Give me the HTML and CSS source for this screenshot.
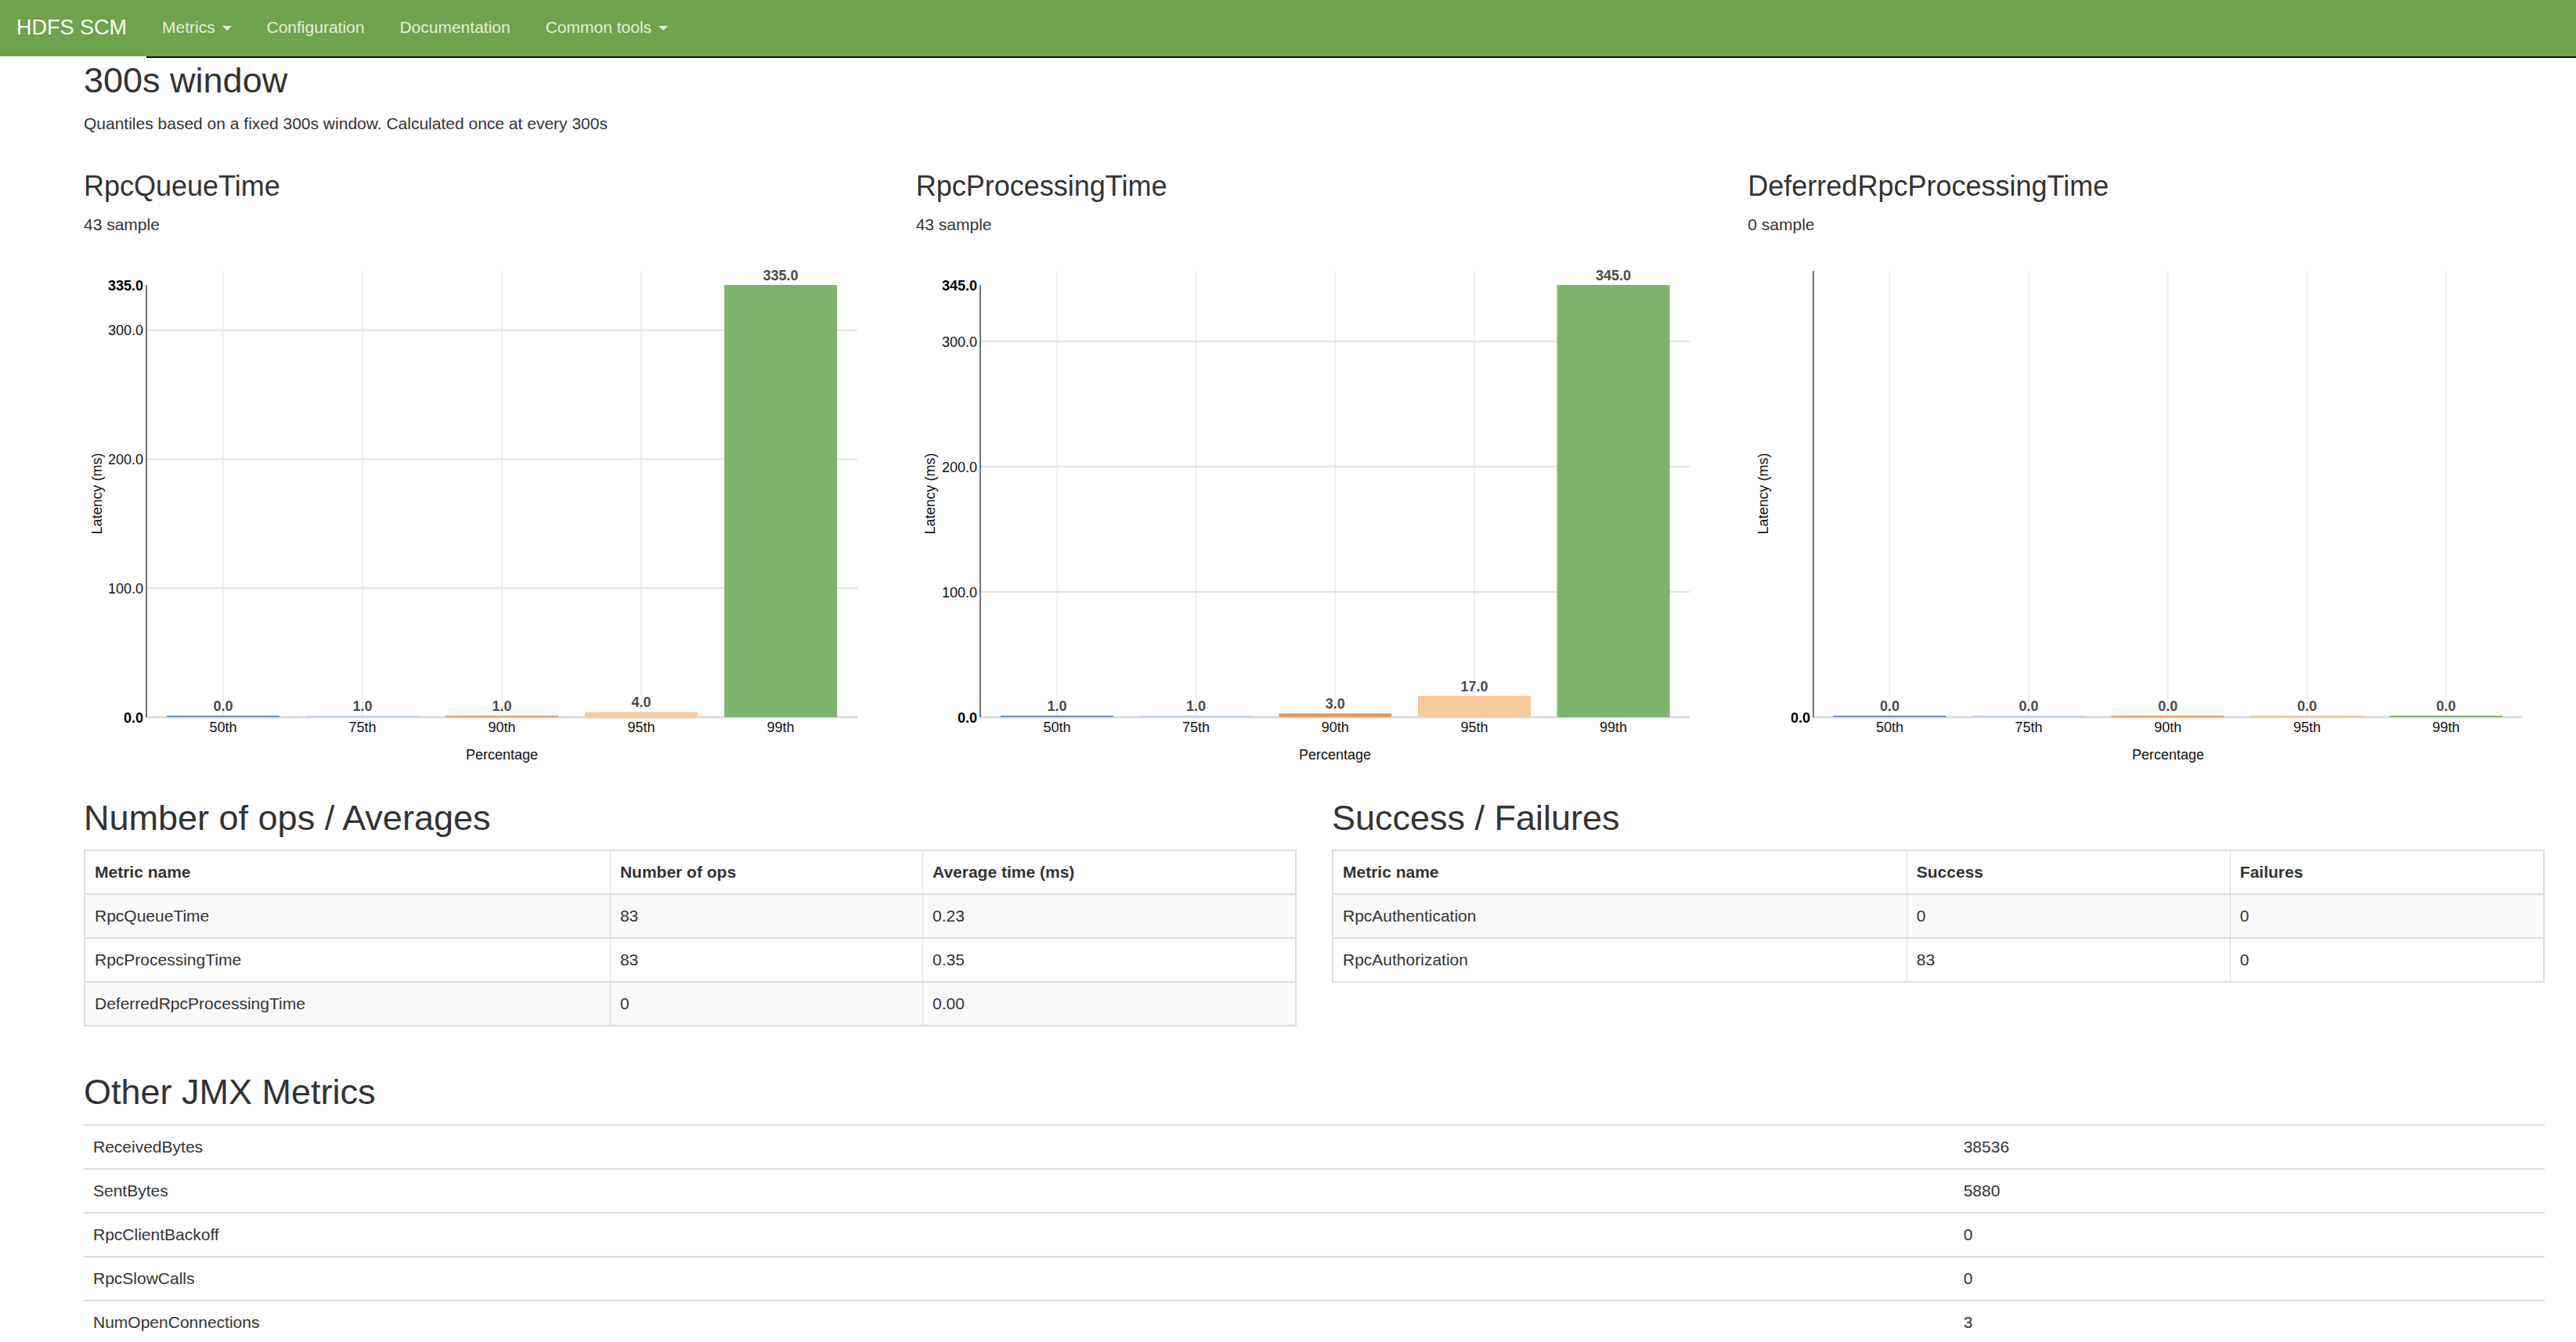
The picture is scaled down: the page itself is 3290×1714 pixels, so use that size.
FILE: index.html
```html
<!DOCTYPE html>
<html lang="en">
<head>
<meta charset="utf-8">
<title>HDFS SCM - RPC metrics</title>
<link rel="stylesheet" href="styles.css">
</head>
<body>
<nav class="navbar">
  <a class="brand" href="#">HDFS SCM</a>
  <ul class="nav">
    <li><a href="#">Metrics <span class="caret"></span></a></li>
    <li><a href="#">Configuration</a></li>
    <li><a href="#">Documentation</a></li>
    <li><a href="#">Common tools <span class="caret"></span></a></li>
  </ul>
</nav>
<div class="navbar-rule"></div>

<main class="container">
  <h2 class="page-title">300s window</h2>
  <p>Quantiles based on a fixed 300s window. Calculated once at every 300s</p>

  <div class="grid3">
    <section class="col">
      <h3>RpcQueueTime</h3>
      <p>43 sample</p>
      <svg class="chart" width="1018" height="673">
        <g class="hgrid">
          <line x1="80" y1="104.7" x2="988" y2="104.7"/>
          <line x1="80" y1="269.4" x2="988" y2="269.4"/>
          <line x1="80" y1="434.2" x2="988" y2="434.2"/>
        </g>
        <g class="vgrid">
          <line x1="177.9" y1="29" x2="177.9" y2="599"/>
          <line x1="355.9" y1="29" x2="355.9" y2="599"/>
          <line x1="534" y1="29" x2="534" y2="599"/>
          <line x1="712" y1="29" x2="712" y2="599"/>
          <line x1="890.1" y1="29" x2="890.1" y2="599"/>
        </g>
        <line class="zero" x1="80" y1="599" x2="988" y2="599"/>
        <line class="axis" x1="80" y1="47" x2="80" y2="599"/>
        <g class="ytick">
          <text class="max" x="76" y="53.5">335.0</text>
          <text x="76" y="111.2">300.0</text>
          <text x="76" y="275.9">200.0</text>
          <text x="76" y="440.7">100.0</text>
          <text class="max" x="76" y="605.5">0.0</text>
        </g>
        <g class="bars">
          <rect class="b1" x="105.9" y="597" width="144" height="2"/>
          <rect class="b2" x="283.9" y="597" width="144" height="2"/>
          <rect class="b3" x="462" y="597" width="144" height="2"/>
          <rect class="b4" x="640" y="592.4" width="144" height="6.6"/>
          <rect class="b5" x="818.1" y="47" width="144" height="552"/>
        </g>
        <g class="vals">
          <text x="177.9" y="591">0.0</text>
          <text x="355.9" y="591">1.0</text>
          <text x="534" y="591">1.0</text>
          <text x="712" y="586.4">4.0</text>
          <text x="890.1" y="41">335.0</text>
        </g>
        <g class="xtick">
          <text x="177.9" y="618">50th</text>
          <text x="355.9" y="618">75th</text>
          <text x="534" y="618">90th</text>
          <text x="712" y="618">95th</text>
          <text x="890.1" y="618">99th</text>
        </g>
        <text class="xlabel" x="534" y="653">Percentage</text>
        <text class="ylabel" transform="translate(23 313.5) rotate(-90)">Latency (ms)</text>
      </svg>
    </section>

    <section class="col">
      <h3>RpcProcessingTime</h3>
      <p>43 sample</p>
      <svg class="chart" width="1018" height="673">
        <g class="hgrid">
          <line x1="82" y1="119" x2="988" y2="119"/>
          <line x1="82" y1="279" x2="988" y2="279"/>
          <line x1="82" y1="439" x2="988" y2="439"/>
        </g>
        <g class="vgrid">
          <line x1="180" y1="29" x2="180" y2="599"/>
          <line x1="357.6" y1="29" x2="357.6" y2="599"/>
          <line x1="535.3" y1="29" x2="535.3" y2="599"/>
          <line x1="713" y1="29" x2="713" y2="599"/>
          <line x1="890.6" y1="29" x2="890.6" y2="599"/>
        </g>
        <line class="zero" x1="82" y1="599" x2="988" y2="599"/>
        <line class="axis" x1="82" y1="47" x2="82" y2="599"/>
        <g class="ytick">
          <text class="max" x="78" y="53.5">345.0</text>
          <text x="78" y="125.5">300.0</text>
          <text x="78" y="285.5">200.0</text>
          <text x="78" y="445.5">100.0</text>
          <text class="max" x="78" y="605.5">0.0</text>
        </g>
        <g class="bars">
          <rect class="b1" x="108" y="597" width="144" height="2"/>
          <rect class="b2" x="285.6" y="597" width="144" height="2"/>
          <rect class="b3" x="463.3" y="594.2" width="144" height="4.8"/>
          <rect class="b4" x="641" y="571.8" width="144" height="27.2"/>
          <rect class="b5" x="818.6" y="47" width="144" height="552"/>
        </g>
        <g class="vals">
          <text x="180" y="591">1.0</text>
          <text x="357.6" y="591">1.0</text>
          <text x="535.3" y="588.2">3.0</text>
          <text x="713" y="565.8">17.0</text>
          <text x="890.6" y="41">345.0</text>
        </g>
        <g class="xtick">
          <text x="180" y="618">50th</text>
          <text x="357.6" y="618">75th</text>
          <text x="535.3" y="618">90th</text>
          <text x="713" y="618">95th</text>
          <text x="890.6" y="618">99th</text>
        </g>
        <text class="xlabel" x="535" y="653">Percentage</text>
        <text class="ylabel" transform="translate(24 313.5) rotate(-90)">Latency (ms)</text>
      </svg>
    </section>

    <section class="col">
      <h3>DeferredRpcProcessingTime</h3>
      <p>0 sample</p>
      <svg class="chart" width="1018" height="673">
        <g class="vgrid">
          <line x1="181.4" y1="29" x2="181.4" y2="599"/>
          <line x1="359" y1="29" x2="359" y2="599"/>
          <line x1="536.7" y1="29" x2="536.7" y2="599"/>
          <line x1="714.4" y1="29" x2="714.4" y2="599"/>
          <line x1="892" y1="29" x2="892" y2="599"/>
        </g>
        <line class="zero" x1="84" y1="599" x2="990" y2="599"/>
        <line class="axis" x1="84" y1="29" x2="84" y2="599"/>
        <g class="ytick">
          <text class="max" x="80" y="605.5">0.0</text>
        </g>
        <g class="bars">
          <rect class="b1" x="109.4" y="597" width="144" height="2"/>
          <rect class="b2" x="287" y="597" width="144" height="2"/>
          <rect class="b3" x="464.7" y="597" width="144" height="2"/>
          <rect class="b4" x="642.4" y="597" width="144" height="2"/>
          <rect class="b5" x="820" y="597" width="144" height="2"/>
        </g>
        <g class="vals">
          <text x="181.4" y="591">0.0</text>
          <text x="359" y="591">0.0</text>
          <text x="536.7" y="591">0.0</text>
          <text x="714.4" y="591">0.0</text>
          <text x="892" y="591">0.0</text>
        </g>
        <g class="xtick">
          <text x="181.4" y="618">50th</text>
          <text x="359" y="618">75th</text>
          <text x="536.7" y="618">90th</text>
          <text x="714.4" y="618">95th</text>
          <text x="892" y="618">99th</text>
        </g>
        <text class="xlabel" x="537" y="653">Percentage</text>
        <text class="ylabel" transform="translate(26 313.5) rotate(-90)">Latency (ms)</text>
      </svg>
    </section>
  </div>

  <div class="grid2">
    <section class="col">
      <h2>Number of ops / Averages</h2>
      <table class="table bordered striped ops">
        <thead>
          <tr><th class="c1">Metric name</th><th class="c2">Number of ops</th><th class="c3">Average time (ms)</th></tr>
        </thead>
        <tbody>
          <tr><td>RpcQueueTime</td><td>83</td><td>0.23</td></tr>
          <tr><td>RpcProcessingTime</td><td>83</td><td>0.35</td></tr>
          <tr><td>DeferredRpcProcessingTime</td><td>0</td><td>0.00</td></tr>
        </tbody>
      </table>
    </section>
    <section class="col">
      <h2>Success / Failures</h2>
      <table class="table bordered striped sf">
        <thead>
          <tr><th class="c1">Metric name</th><th class="c2">Success</th><th class="c3">Failures</th></tr>
        </thead>
        <tbody>
          <tr><td>RpcAuthentication</td><td>0</td><td>0</td></tr>
          <tr><td>RpcAuthorization</td><td>83</td><td>0</td></tr>
        </tbody>
      </table>
    </section>
  </div>

  <h2 class="other-title">Other JMX Metrics</h2>
  <table class="table jmx">
    <tbody>
      <tr><td class="c1">ReceivedBytes</td><td class="c2">38536</td></tr>
      <tr><td>SentBytes</td><td>5880</td></tr>
      <tr><td>RpcClientBackoff</td><td>0</td></tr>
      <tr><td>RpcSlowCalls</td><td>0</td></tr>
      <tr><td>NumOpenConnections</td><td>3</td></tr>
    </tbody>
  </table>
</main>
</body>
</html>
```

FILE: styles.css
```css
* {
  box-sizing: border-box;
}

html,
body {
  margin: 0;
  padding: 0;
}

body {
  font-family: "Liberation Sans", Arial, Helvetica, sans-serif;
  font-size: 21px;
  line-height: 30px;
  color: #333;
  background: #fff;
  overflow: hidden;
}

/* ---------- navbar ---------- */
.navbar {
  display: flex;
  align-items: center;
  height: 72px;
  padding-bottom: 2px;
  background: #6fa24d;
}

.brand {
  font-size: 27px;
  line-height: 30px;
  color: #fff;
  text-decoration: none;
  padding: 0 22.5px 0 21px;
}

.nav {
  display: flex;
  list-style: none;
  margin: 0;
  padding: 0;
}

.nav a {
  display: block;
  padding: 0 22.5px;
  color: #e6eedc;
  text-decoration: none;
}

.caret {
  display: inline-block;
  width: 0;
  height: 0;
  margin-left: 3px;
  vertical-align: middle;
  border-top: 6px solid;
  border-left: 6px solid transparent;
  border-right: 6px solid transparent;
}

.navbar-rule {
  height: 2px;
  margin-left: 187px;
  background: #0a0a0a;
}

/* ---------- page ---------- */
.container {
  padding: 0 40px 0 107px;
}

h2,
h3 {
  font-weight: normal;
  line-height: 1.1;
  margin: 30px 0 15px;
  color: #333;
}

h2 {
  font-size: 45px;
}

h3 {
  font-size: 36px;
}

.page-title {
  margin-top: 4px;
}

p {
  margin: 0 0 15px;
}

.grid3 {
  display: grid;
  grid-template-columns: repeat(3, 1fr);
  column-gap: 45px;
}

.grid2 {
  display: grid;
  grid-template-columns: 1fr 1fr;
  column-gap: 45px;
}

.col {
  min-width: 0;
}

/* ---------- charts ---------- */
.chart {
  display: block;
  font-family: "Liberation Sans", Arial, Helvetica, sans-serif;
  font-size: 18px;
}

.hgrid line {
  stroke: #e4e4e4;
  stroke-width: 2;
}

.vgrid line {
  stroke: #ececec;
  stroke-width: 1.5;
}

.zero {
  stroke: #dcdcdc;
  stroke-width: 3;
}

.axis {
  stroke: #444;
  stroke-width: 1.5;
}

.ytick text {
  text-anchor: end;
  fill: #111;
}

.ytick .max {
  font-weight: bold;
  fill: #000;
}

.vals text {
  text-anchor: middle;
  font-weight: bold;
  fill: #4a4a4a;
}

.xtick text {
  text-anchor: middle;
  fill: #111;
}

.xlabel,
.ylabel {
  text-anchor: middle;
  fill: #111;
}

.b1 { fill: #6a93c4; }
.b2 { fill: #c5d4ea; }
.b3 { fill: #e99a5e; }
.b4 { fill: #f7c99c; }
.b5 { fill: #7db46b; }

/* ---------- tables ---------- */
.table {
  width: 100%;
  border-collapse: collapse;
  margin-bottom: 28px;
}

.table th,
.table td {
  padding: 12px;
  text-align: left;
  vertical-align: top;
  line-height: 30px;
  border-top: 2px solid #ddd;
}

.table th {
  font-weight: bold;
}

.bordered {
  border: 2px solid #ddd;
}

.bordered th,
.bordered td {
  border-left: 1px solid #ddd;
  border-right: 1px solid #ddd;
  border-bottom: 2px solid #ddd;
}

.striped tbody tr:nth-child(odd) {
  background: #f9f9f9;
}

.ops .c1 { width: 43.4%; }
.ops .c2 { width: 25.8%; }
.ops .c3 { width: 30.8%; }

.sf .c1 { width: 47.4%; }
.sf .c2 { width: 26.7%; }
.sf .c3 { width: 25.9%; }

.other-title {
  margin-top: 31px;
  margin-bottom: 17px;
}

.jmx .c1 { width: 76%; }
.jmx .c2 { width: 24%; }
```
